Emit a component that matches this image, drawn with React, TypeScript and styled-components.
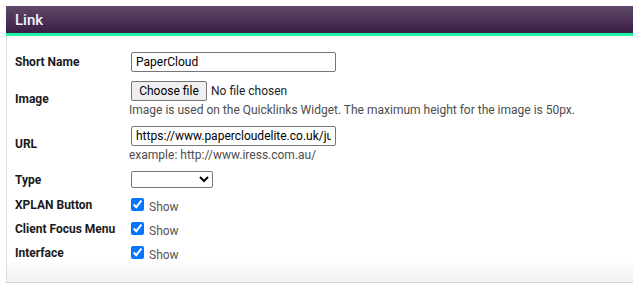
import styled, { createGlobalStyle } from "styled-components";

const GlobalStyle = createGlobalStyle`
  body {
    margin: 6px 0 0 6px;
    font-family: Roboto, "Liberation Sans", Arial, sans-serif;
    background: #fff;
    overflow: hidden;
  }
`;

const Panel = styled.div`
  width: 627px;
`;

const Header = styled.div`
  height: 27px;
  display: flex;
  align-items: center;
  padding-left: 9px;
  background: linear-gradient(#5e4868, #3a1e46);
  color: #f6f2f8;
  font-size: 15px;
  font-weight: 500;
  border-bottom: 3px solid #1ef5a6;
`;

const Body = styled.div`
  display: flex;
  flex-direction: column;
  gap: 9px;
  padding: 16px 8px 22px 8px;
  border-left: 1px solid #dcdcdc;
  border-bottom: 1px solid #d6d6d6;
  background: linear-gradient(#fff 0, #fff 224px, #f1f1f3 100%);
`;

const Row = styled.div`
  display: grid;
  grid-template-columns: 116px 1fr;
  align-items: center;
`;

const Label = styled.div`
  font-size: 12px;
  font-weight: 700;
  color: #1a1a1a;
`;

const Field = styled.div`
  display: flex;
  flex-direction: column;
  align-items: flex-start;
  gap: 2px;
`;

const TextInput = styled.input`
  box-sizing: border-box;
  width: 205px;
  height: 20px;
  margin: 0;
  padding: 1px 4px;
  border: 1px solid #767676;
  border-radius: 2px;
  font-family: Roboto, "Liberation Sans", Arial, sans-serif;
  font-size: 12px;
  color: #000;
  outline: none;
`;

const FileLine = styled.div`
  display: flex;
  align-items: center;
  gap: 4px;
  font-size: 12px;
  color: #222;
`;

const FileButton = styled.button`
  box-sizing: border-box;
  width: 76px;
  height: 20px;
  padding: 0;
  white-space: nowrap;
  background: #efefef;
  border: 1px solid #767676;
  border-radius: 2px;
  font-family: Roboto, "Liberation Sans", Arial, sans-serif;
  font-size: 12px;
  color: #000;
`;

const Help = styled.div`
  margin-left: -2px;
  font-size: 12px;
  line-height: 14px;
  color: #4d4d4d;
`;

const Select = styled.select`
  box-sizing: border-box;
  width: 82px;
  height: 17px;
  border: 1px solid #767676;
  border-radius: 2px;
  background: #fff;
  font-size: 12px;
`;

const CheckLine = styled.label`
  display: flex;
  align-items: center;
  gap: 5px;
  height: 15px;
  font-size: 12px;
  color: #555;
`;

const Check = styled.input`
  width: 13px;
  height: 13px;
  margin: 0;
  accent-color: #0075ff;
`;

const ShowText = styled.span`
  position: relative;
  top: 2px;
`;

const checks = ["XPLAN Button", "Client Focus Menu", "Interface"];

export default function App() {
  return (
    <>
      <GlobalStyle />
      <Panel>
        <Header>Link</Header>
        <Body>
          <Row>
            <Label>Short Name</Label>
            <Field>
              <TextInput defaultValue="PaperCloud" />
            </Field>
          </Row>
          <Row>
            <Label>Image</Label>
            <Field>
              <FileLine>
                <FileButton type="button">Choose file</FileButton>
                <span>No file chosen</span>
              </FileLine>
              <Help>
                Image is used on the Quicklinks Widget. The maximum height for
                the image is 50px.
              </Help>
            </Field>
          </Row>
          <Row>
            <Label>URL</Label>
            <Field>
              <TextInput defaultValue="https://www.papercloudelite.co.uk/just" />
              <Help>example: http://www.iress.com.au/</Help>
            </Field>
          </Row>
          <Row>
            <Label>Type</Label>
            <Field>
              <Select defaultValue="">
                <option value=""></option>
              </Select>
            </Field>
          </Row>
          {checks.map((name) => (
            <Row key={name}>
              <Label>{name}</Label>
              <Field>
                <CheckLine>
                  <Check type="checkbox" defaultChecked />
                  <ShowText>Show</ShowText>
                </CheckLine>
              </Field>
            </Row>
          ))}
        </Body>
      </Panel>
    </>
  );
}
